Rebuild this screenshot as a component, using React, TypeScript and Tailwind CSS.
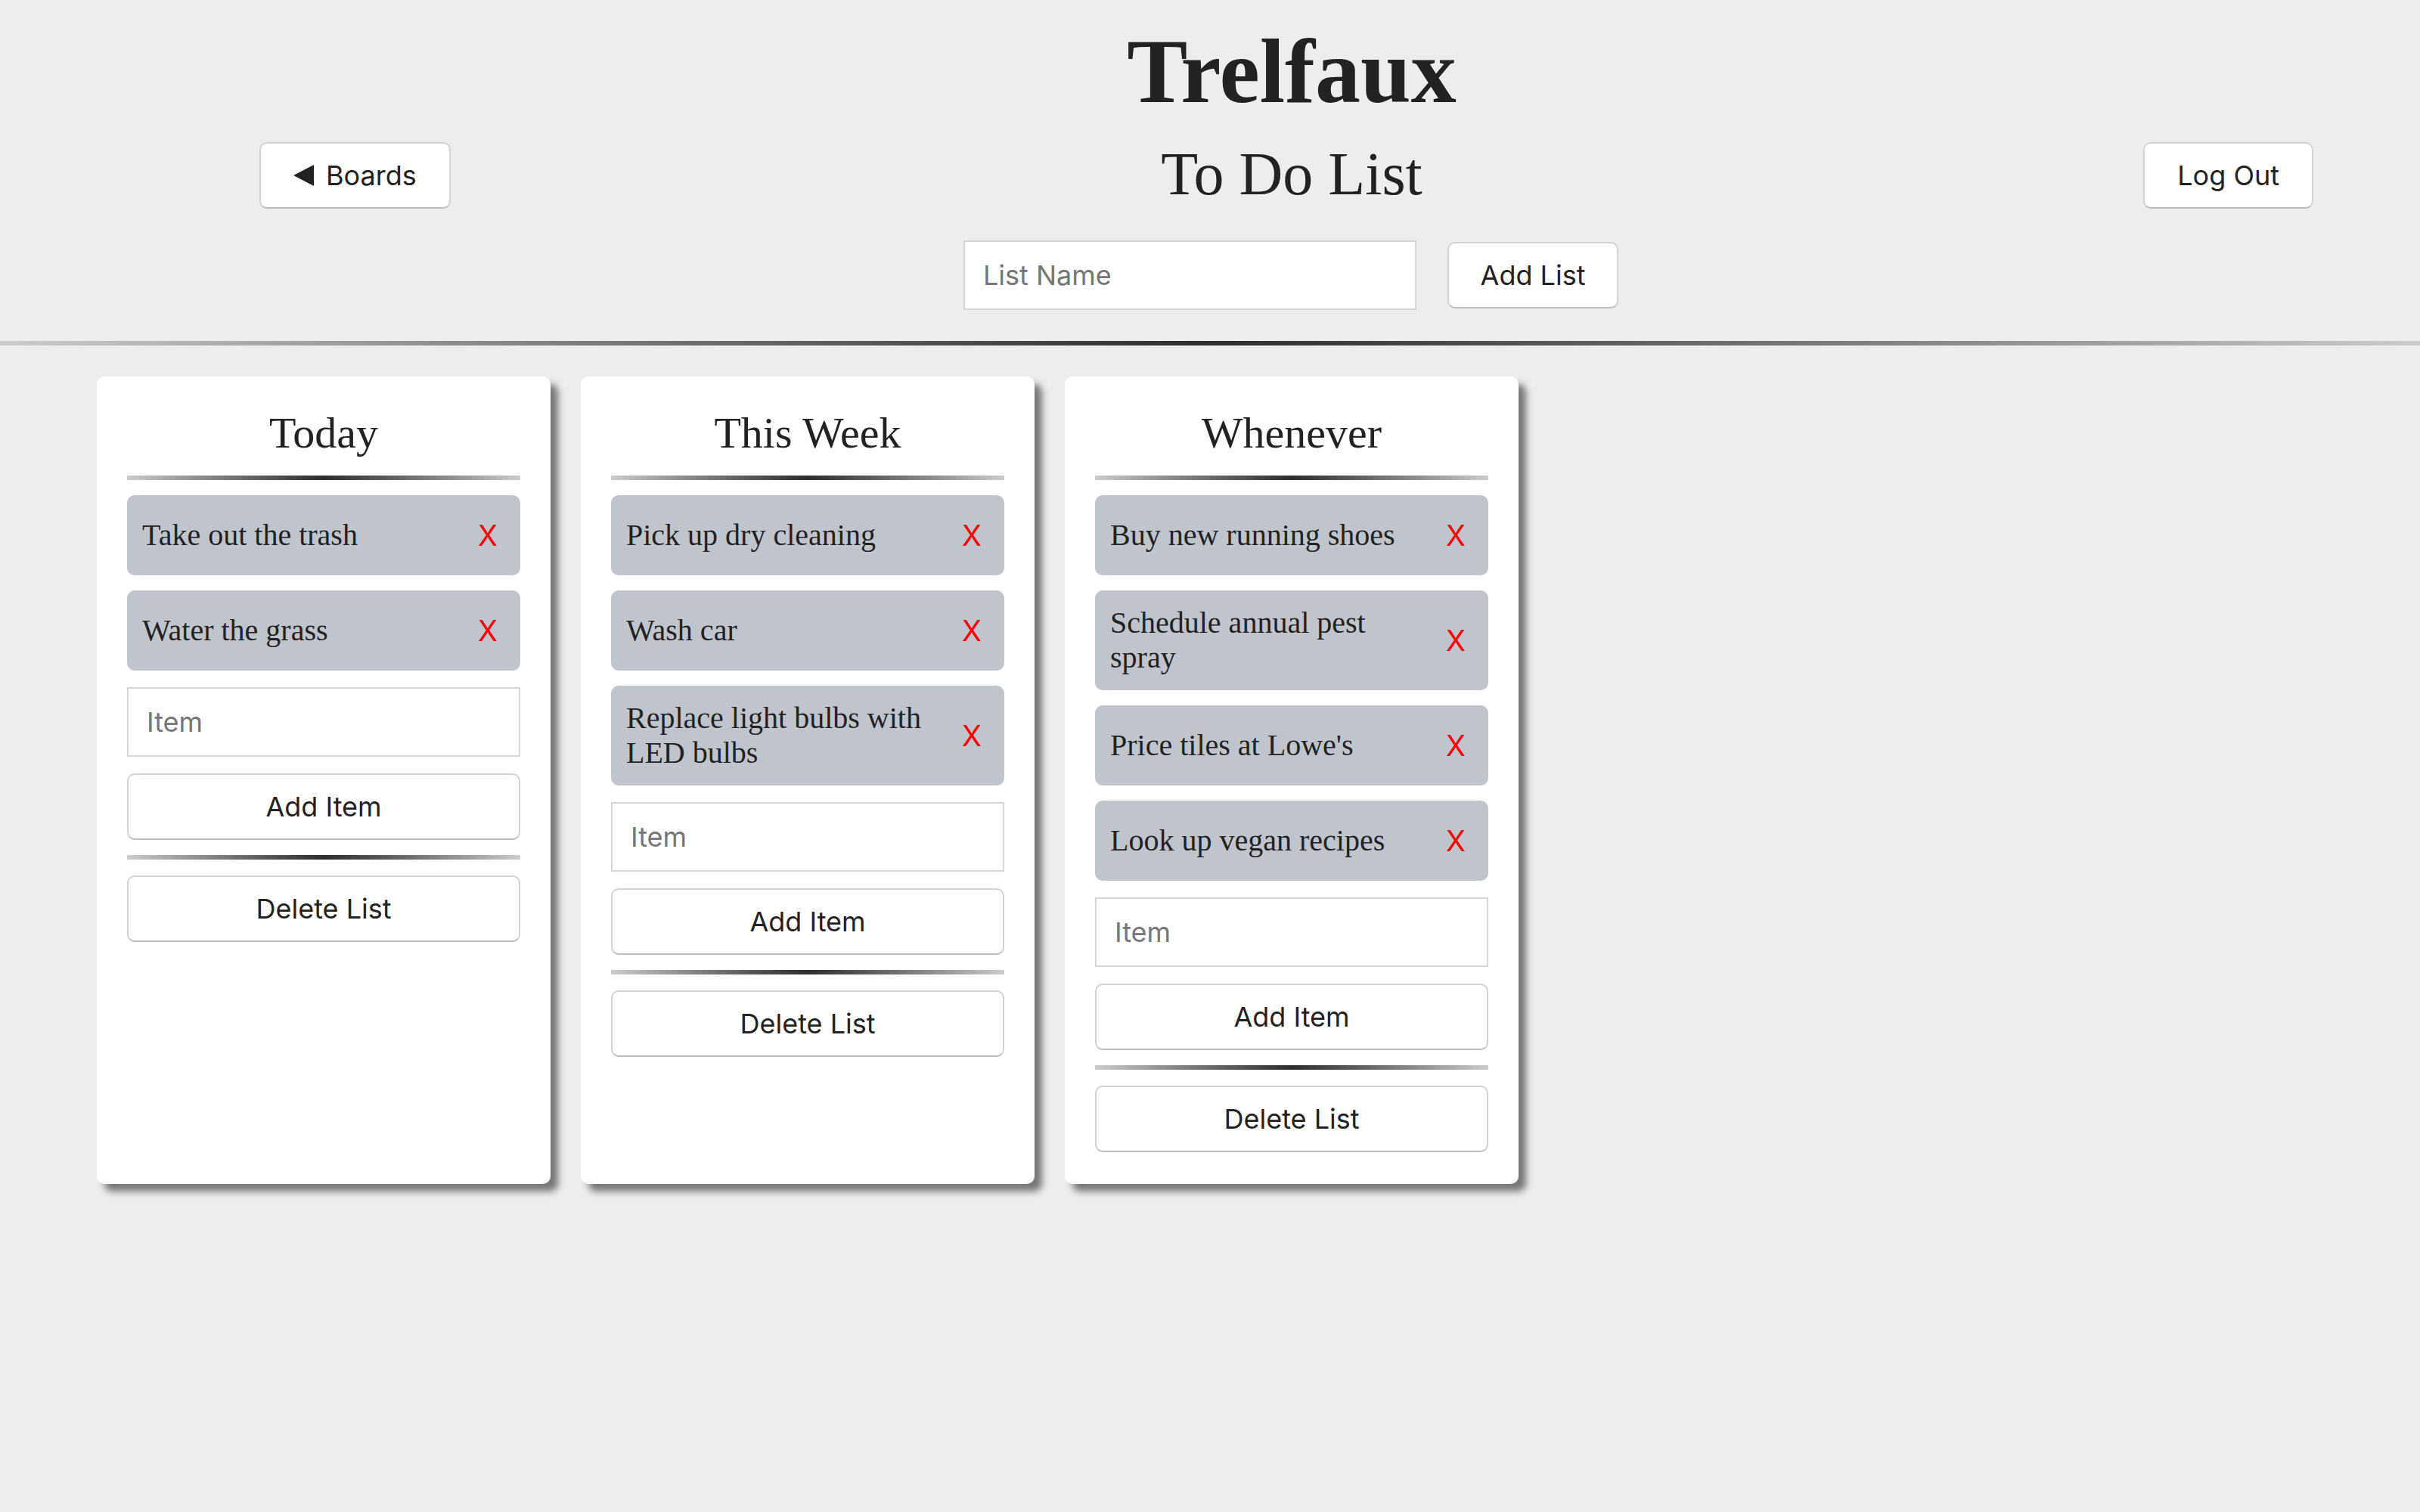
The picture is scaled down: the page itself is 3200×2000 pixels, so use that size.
import React from 'react';

interface TodoList {
  title: string;
  items: string[];
}

const lists: TodoList[] = [
  { title: 'Today', items: ['Take out the trash', 'Water the grass'] },
  { title: 'This Week', items: ['Pick up dry cleaning', 'Wash car', 'Replace light bulbs with LED bulbs'] },
  {
    title: 'Whenever',
    items: ['Buy new running shoes', 'Schedule annual pest spray', "Price tiles at Lowe's", 'Look up vegan recipes'],
  },
];

const sans = "font-['Inter','Liberation_Sans',sans-serif]";
const serif = "font-['Liberation_Serif','Times_New_Roman',serif]";

function Rule({ className = '' }: { className?: string }) {
  return <div className={`h-[6px] w-full bg-linear-to-r from-[#cccccc] via-[#2e2e2e] to-[#cccccc] ${className}`} />;
}

function Button({ children, className = '' }: { children: React.ReactNode; className?: string }) {
  return (
    <button
      className={`${sans} flex items-center justify-center gap-[16px] whitespace-nowrap h-[88px] px-[43px] bg-white text-[#222] text-[36px] rounded-[10px] border-2 border-[#d2d2d2] border-b-[#bcbcbc] ${className}`}
    >
      {children}
    </button>
  );
}

function ListCard({ list }: { list: TodoList }) {
  return (
    <div className="w-[600px] shrink-0 bg-white rounded-[10px] shadow-[10px_10px_10px_#777777] px-[40px] pt-[43px] pb-[42px] flex flex-col">
      <h3 className={`${serif} text-center text-[58px] leading-[64px] text-[#222]`}>{list.title}</h3>
      <Rule className="mt-[24px]" />

      <div className="mt-[20px] flex flex-col gap-[20px]">
        {list.items.map((item) => (
          <div key={item} className="flex items-center rounded-[10px] bg-[#c0c4cd] pl-[20px] pr-[30px] py-[20px]">
            <span className={`${serif} flex-1 text-[40px] leading-[46px] text-[#222]`}>{item}</span>
            <span className={`${sans} ml-[30px] h-[66px] flex items-center text-[38px] text-[#ff0000]`}>X</span>
          </div>
        ))}
      </div>

      <input
        placeholder="Item"
        className={`${sans} mt-[22px] h-[92px] w-full bg-white border-2 border-[#d6d6d6] px-[24px] text-[36px] text-[#222] placeholder:text-[#767676] outline-none`}
      />
      <Button className="mt-[22px] w-full">Add Item</Button>
      <Rule className="mt-[20px]" />
      <Button className="mt-[21px] w-full">Delete List</Button>
    </div>
  );
}

export default function App() {
  return (
    <div className="min-h-screen w-full bg-[#ededed]">
      <header className="flex">
        <div className="w-[1274px] shrink-0 pl-[343px] pt-[188px]">
          <Button>
            <svg width="27" height="28" viewBox="0 0 27 28" className="shrink-0">
              <polygon points="27,0 27,28 0,14" fill="#222" />
            </svg>
            <span>Boards</span>
          </Button>
        </div>

        <div className="w-[868px] shrink-0 flex flex-col items-center">
          <h1 className={`${serif} mt-[35px] text-[120px] leading-[120px] font-bold text-[#222]`}>Trelfaux</h1>
          <h2 className={`${serif} mt-[35px] text-[80px] leading-[80px] text-[#222]`}>To Do List</h2>
          <div className="mt-[48px] w-full flex items-center gap-[41px]">
            <input
              placeholder="List Name"
              className={`${sans} h-[92px] w-[599px] bg-white border-2 border-[#d6d6d6] px-[24px] text-[36px] text-[#222] placeholder:text-[#767676] outline-none`}
            />
            <Button className="w-[226px] px-0">Add List</Button>
          </div>
        </div>

        <div className="flex-1 flex justify-end pr-[141px] pt-[188px]">
          <Button>Log Out</Button>
        </div>
      </header>

      <Rule className="mt-[41px]" />

      <main className="mt-[41px] pl-[128px] flex gap-[40px]">
        {lists.map((list) => (
          <ListCard key={list.title} list={list} />
        ))}
      </main>
    </div>
  );
}
